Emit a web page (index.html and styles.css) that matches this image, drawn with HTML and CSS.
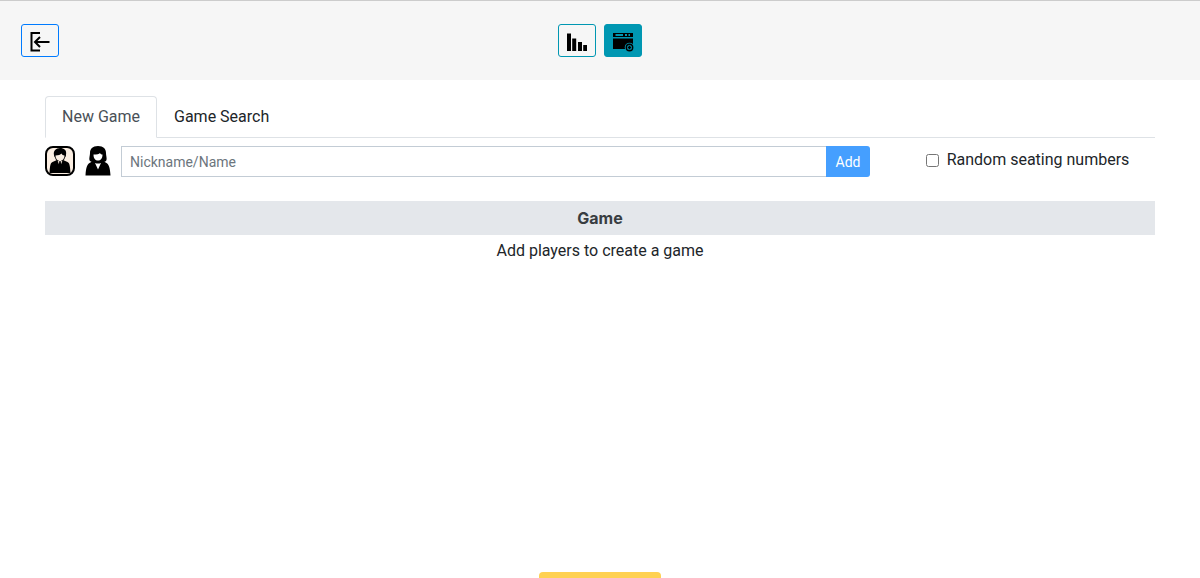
FILE: index.html
```html
<!DOCTYPE html>
<html lang="en">
<head>
<meta charset="utf-8">
<meta name="viewport" content="width=device-width, initial-scale=1">
<title>New Game</title>
<link rel="stylesheet" href="styles.css">
</head>
<body>
<header class="topbar">
  <div class="topbar-side">
    <button class="icon-btn icon-btn-exit" type="button" aria-label="Exit">
      <svg width="22" height="22" viewBox="0 0 22 22" fill="none" stroke="#000" stroke-width="2"><path d="M11 3H2.500V20.500H11M20.500 12H6M11 7L6 12L11 17"/></svg>
    </button>
  </div>
  <nav class="topbar-nav">
    <button class="icon-btn" type="button" aria-label="Rating">
      <svg width="22" height="22" viewBox="0 0 22 22"><path d="M1 3.500h4v17.500H1zM6.200 8.500h4v12.500h-4zM12 12h4v9h-4zM17.200 15h3.800v6h-3.800z"/></svg>
    </button>
    <button class="icon-btn icon-btn-active" type="button" aria-label="Game">
      <svg width="22" height="22" viewBox="0 0 22 22"><path d="M1 3h20v4H1zM1 8.500h20V19H1z"/><path d="M3.500 5H11M13 5h2M16.500 5h1.500" stroke="#0097b2" stroke-width="1.800"/><circle cx="17.500" cy="17.500" r="4.800" fill="#0097b2"/><circle cx="17.500" cy="17.500" r="3.200" fill="#0097b2" stroke="#000" stroke-width="1.400"/><path d="M15.800 17.500h3.400M17.500 15.800v3.400" stroke="#000" stroke-width="1.400"/></svg>
    </button>
  </nav>
  <div class="topbar-side"></div>
</header>

<main class="content">
  <nav class="tabs">
    <a class="tab tab-active" href="#new">New Game</a>
    <a class="tab" href="#search">Game Search</a>
  </nav>

  <form class="controls">
    <div class="add-player">
      <button class="avatar avatar-selected" type="button" aria-label="Male">
        <svg width="26" height="26" viewBox="0 0 26 26"><path d="M7 7C6 3 9 0 13 0s7 2 6 7c0 1-.5 2-1 2.500C17.500 12 15.500 14 13 14s-4.500-2-5-4.500C7.500 9 7 8 7 7z"/><path d="M8.500 7.500c3 0 5-1 6-2 .5 1 1.500 2 3 2 0 3-2 5.500-4.500 5.500S8.500 10.500 8.500 7.500z" fill="#fbeee2"/><path d="M10 12l-4.500 2C3.500 15 3 17 2.500 25h21C23 17 22.500 15 20.500 14L16 12l-3 2z"/><path d="M10.500 12.500L13 19l2.500-6.500L13 14z" fill="#fbeee2"/><path d="M12.200 14h1.600l.5 4-1.300 3-1.300-3z"/></svg>
      </button>
      <button class="avatar" type="button" aria-label="Female">
        <svg width="26" height="30" viewBox="0 0 26 30"><path d="M13 0c5.500 0 8 3 8 7 0 3 1.500 6 0 8-2 2-14 2-16 0-1.500-2 0-5 0-8 0-4 2.500-7 8-7z"/><path d="M8.500 8.500c3.500 0 5.500-.5 6.500-1.500.5 1 1.500 1.500 2.500 1.500 0 4-2 6-4.500 6s-4.500-2-4.500-6z" fill="#fff"/><path d="M8 15l-3.500 2C2.500 18 1 21 .5 29.500h25C25 21 23.500 18 21.500 17L18 15z"/><path d="M10 17l3 6.500 3-6.500c-2 .8-4 .8-6 0z" fill="#fff"/></svg>
      </button>
      <div class="input-group">
        <input class="name-input" type="text" placeholder="Nickname/Name" aria-label="Nickname/Name">
        <button class="add-btn" type="button">Add</button>
      </div>
    </div>
    <label class="random"><input class="random-box" type="checkbox">Random seating numbers</label>
  </form>

  <h2 class="section-title">Game</h2>
  <p class="hint">Add players to create a game</p>
</main>

<footer class="bottom"><button class="bottom-btn" type="button" aria-label="Menu"></button></footer>
</body>
</html>
```
FILE: styles.css
```css
* { box-sizing: border-box; }

body {
  display: flex;
  flex-direction: column;
  min-height: 100vh;
  margin: 0;
  background: #fff;
  color: #212529;
  font: 16px/24px Roboto, "Liberation Sans", sans-serif;
}

button, input { font-family: inherit; }
svg { display: block; }

.topbar {
  display: flex;
  align-items: center;
  padding: 23px 21px;
  border-top: 1px solid #ccc;
  background: #f6f6f6;
}
.topbar-side { flex: 1; }
.topbar-nav { display: flex; gap: 8px; }

.icon-btn {
  display: flex;
  align-items: center;
  justify-content: center;
  width: 38px;
  height: 33px;
  padding: 0;
  border: 1px solid #0097b2;
  border-radius: 3px;
  background: transparent;
}
.icon-btn-exit { border-color: #007bff; }
.icon-btn-active { background: #0097b2; }

.content {
  flex: 1;
  padding: 16px 45px 0;
}

.tabs {
  display: flex;
  border-bottom: 1px solid #dee2e6;
}
.tab {
  margin-bottom: -1px;
  padding: 8px 16px;
  border: 1px solid transparent;
  border-radius: 4px 4px 0 0;
  color: #212529;
  text-decoration: none;
}
.tab-active {
  border-color: #dee2e6 #dee2e6 #fff;
  background: #fff;
  color: #495057;
}

.controls {
  display: flex;
  gap: 30px;
  margin: 8px 0 24px;
}
.add-player {
  display: flex;
  flex: 1;
  gap: 8px;
}
.avatar {
  display: flex;
  align-items: center;
  justify-content: center;
  width: 30px;
  height: 30px;
  padding: 0;
  border: 0;
  background: transparent;
}
.avatar-selected {
  border: 2px solid #000;
  border-radius: 8px;
  background: #fbeee2;
}
.input-group { display: flex; flex: 1; }
.name-input {
  flex: 1;
  min-width: 0;
  height: 31px;
  padding: 4px 8px;
  border: 1px solid #c3ccd5;
  border-right: 0;
  border-radius: 0;
  font-size: 14px;
}
.name-input::placeholder { color: #6c757d; }
.add-btn {
  width: 44px;
  padding: 0;
  border: 0;
  border-radius: 0 3px 3px 0;
  background: #459fff;
  color: #fff;
  font-size: 14px;
}
.random {
  display: flex;
  flex: 0 0 255px;
  align-items: center;
  justify-content: center;
  gap: 8px;
  height: 28px;
  white-space: nowrap;
}
.random-box { width: 13px; height: 13px; margin: 0; }

.section-title {
  margin: 0;
  padding: 5px;
  background: #e4e7eb;
  color: #383d41;
  font-family: Inter, sans-serif;
  font-size: 16px;
  font-weight: 700;
  text-align: center;
}
.hint { margin: 4px 0; text-align: center; }

.bottom {
  display: flex;
  justify-content: center;
}
.bottom-btn {
  width: 122px;
  height: 6px;
  padding: 0;
  border: 0;
  border-radius: 4px 4px 0 0;
  background: #ffd152;
}
```
